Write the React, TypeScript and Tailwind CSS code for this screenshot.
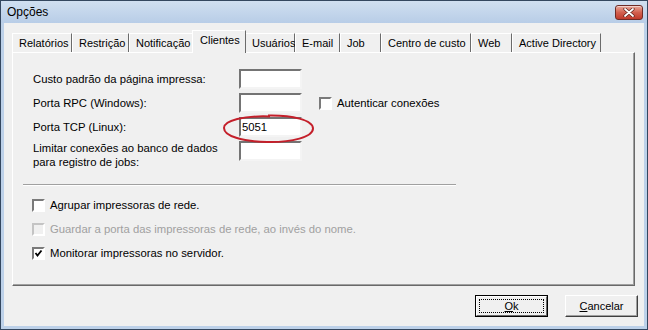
import * as React from 'react'

const tabs = [
  { label: 'Relatórios', w: 'w-[60px]' },
  { label: 'Restrição', w: 'w-[57px]' },
  { label: 'Notificação', w: 'w-[65px]' },
  { label: 'Clientes', w: 'w-[54px]', active: true },
  { label: 'Usuários', w: 'w-[50px]' },
  { label: 'E-mail', w: 'w-[45px]' },
  { label: 'Job', w: 'w-[41px]' },
  { label: 'Centro de custo', w: 'w-[90px]' },
  { label: 'Web', w: 'w-[41px]' },
  { label: 'Active Directory', w: 'w-[89px]' },
]

export default function App() {
  return (
    <div className="flex h-[330px] w-[648px] flex-col overflow-hidden border border-[#34475f] bg-[#bdd1e9] font-['Liberation_Sans',Arial,sans-serif] text-[11px] text-black">
      {/* title bar */}
      <div className="flex h-[22px] shrink-0 items-start justify-between bg-gradient-to-b from-[#d0dff0] to-[#b8cde7] pl-[6px] pr-[4px]">
        <span className="mt-[4px] text-[12px] leading-[15px]">Opções</span>
        <CloseButton />
      </div>

      {/* client area */}
      <div className="mx-[3px] mb-[3px] flex flex-1 flex-col bg-[#f0f0f0]">
        {/* tab strip */}
        <div className="mt-[7px] flex h-[22px] items-end pl-[8px]">
          {tabs.map((t) =>
            t.active ? (
              <div
                key={t.label}
                className={`relative z-10 -mb-px -ml-[2px] -mr-[1px] h-[23px] ${t.w} shrink-0 border-l border-r border-t border-l-white border-r-[#6b6b6b] border-t-white bg-[#f0f0f0] pl-[7px] pt-[3px] leading-[12px]`}
              >
                {t.label}
              </div>
            ) : (
              <div
                key={t.label}
                className={`h-[19px] ${t.w} shrink-0 whitespace-nowrap border-l border-r border-t border-l-white border-r-[#6b6b6b] border-t-white pl-[6px] pt-[3px] leading-[12px]`}
              >
                {t.label}
              </div>
            )
          )}
        </div>

        {/* tab panel */}
        <div className="ml-[8px] h-[234px] w-[623px] border-b border-l border-r border-t border-b-[#696969] border-l-white border-r-[#696969] border-t-white pt-[16px] text-[11.3px] shadow-[inset_-1px_-1px_0_#a0a0a0]">
          <div className="flex flex-col gap-[4px] pl-[20px]">
            <div className="flex items-center">
              <span className="w-[206px] leading-[14px]">Custo padrão da página impressa:</span>
              <TextBox />
            </div>
            <div className="flex items-center">
              <span className="w-[206px] leading-[14px]">Porta RPC (Windows):</span>
              <TextBox />
              <div className="ml-[17px] flex items-center gap-[5px]">
                <CheckBox />
                <span className="leading-[14px]">Autenticar conexões</span>
              </div>
            </div>
            <div className="flex items-center">
              <span className="w-[206px] leading-[14px]">Porta TCP (Linux):</span>
              <div className="relative">
                <TextBox value="5051" />
                <svg
                  className="pointer-events-none absolute left-[-17px] top-[-4px]"
                  width="93"
                  height="32"
                  viewBox="0 0 93 32"
                >
                  <path
                    d="M46 2.5 C70 2 91 7 91 15.5 C91 24 70 29.5 45 29 C20 28.5 2 23 2 15 C2 7.5 22 2.5 48 3.5"
                    fill="none"
                    stroke="#c41f2a"
                    strokeWidth="2"
                  />
                </svg>
              </div>
            </div>
            <div className="flex items-start">
              <span className="w-[206px] whitespace-nowrap leading-[14px]">
                Limitar conexões ao banco de dados
                <br />
                para registro de jobs:
              </span>
              <TextBox />
            </div>
          </div>

          <div className="ml-[10px] mt-[15px] h-[2px] w-[433px] border-b border-t border-b-white border-t-[#a0a0a0]" />

          <div className="mt-[7px] flex flex-col pl-[19px]">
            <div className="flex h-[24px] items-center gap-[5px]">
              <CheckBox />
              <span className="leading-[14px]">Agrupar impressoras de rede.</span>
            </div>
            <div className="flex h-[24px] items-center gap-[5px]">
              <CheckBox disabled />
              <span className="leading-[14px] text-[#a0a0a0]">
                Guardar a porta das impressoras de rede, ao invés do nome.
              </span>
            </div>
            <div className="flex h-[24px] items-center gap-[5px]">
              <CheckBox checked />
              <span className="leading-[14px]">Monitorar impressoras no servidor.</span>
            </div>
          </div>
        </div>

        {/* buttons */}
        <div className="mt-[9px] flex justify-end gap-[17px] pr-[6px]">
          <button
            type="button"
            className="relative h-[22px] w-[73px] border border-black bg-[#f0f0f0] p-0"
          >
            <span className="absolute inset-0 border-b border-l border-r border-t border-b-[#696969] border-l-white border-r-[#696969] border-t-white" />
            <span className="absolute inset-[3px] border border-dotted border-black" />
            <span className="relative leading-[14px]">
              <span className="underline">O</span>k
            </span>
          </button>
          <button
            type="button"
            className="relative h-[22px] w-[73px] border-b border-l border-r border-t border-b-[#404040] border-l-white border-r-[#404040] border-t-white bg-[#f0f0f0] p-0 shadow-[inset_-1px_-1px_0_#a0a0a0]"
          >
            <span className="leading-[14px]">
              <span className="underline">C</span>ancelar
            </span>
          </button>
        </div>
      </div>
    </div>
  )
}

function TextBox({ value }: { value?: string }) {
  return (
    <div className="h-[20px] w-[63px] shrink-0 border-2 border-b-[#f4f4f4] border-l-[#747474] border-r-[#f4f4f4] border-t-[#747474] bg-white pl-[1px] leading-[16px]">
      {value}
    </div>
  )
}

function CheckBox({ checked, disabled }: { checked?: boolean; disabled?: boolean }) {
  return (
    <div
      className={
        disabled
          ? 'flex h-[13px] w-[13px] shrink-0 items-center justify-center border-2 border-b-white border-l-[#c4c4c4] border-r-white border-t-[#c4c4c4] bg-[#f0f0f0]'
          : 'flex h-[13px] w-[13px] shrink-0 items-center justify-center border-2 border-b-white border-l-[#7a7a7a] border-r-white border-t-[#7a7a7a] bg-white'
      }
    >
      {checked && (
        <svg width="9" height="9" viewBox="0 0 9 9">
          <path d="M1.5 4 L3.5 6.5 L7.5 1.5" fill="none" stroke="#000" strokeWidth="1.8" />
        </svg>
      )}
    </div>
  )
}

function CloseButton() {
  return (
    <div className="mt-[4px] flex h-[15px] w-[28px] items-center justify-center rounded-[3px] border border-[#6e2b26] bg-gradient-to-b from-[#e8a89b] via-[#d2604f] to-[#c0392b] shadow-[inset_0_1px_0_rgba(255,255,255,0.5)]">
      <svg width="12" height="9" viewBox="0 0 12 9">
        <path d="M2 1 L10 8 M10 1 L2 8" stroke="#5a1f1a" strokeWidth="3.2" strokeLinecap="round" />
        <path d="M2 1 L10 8 M10 1 L2 8" stroke="#fff" strokeWidth="1.8" strokeLinecap="round" />
      </svg>
    </div>
  )
}
